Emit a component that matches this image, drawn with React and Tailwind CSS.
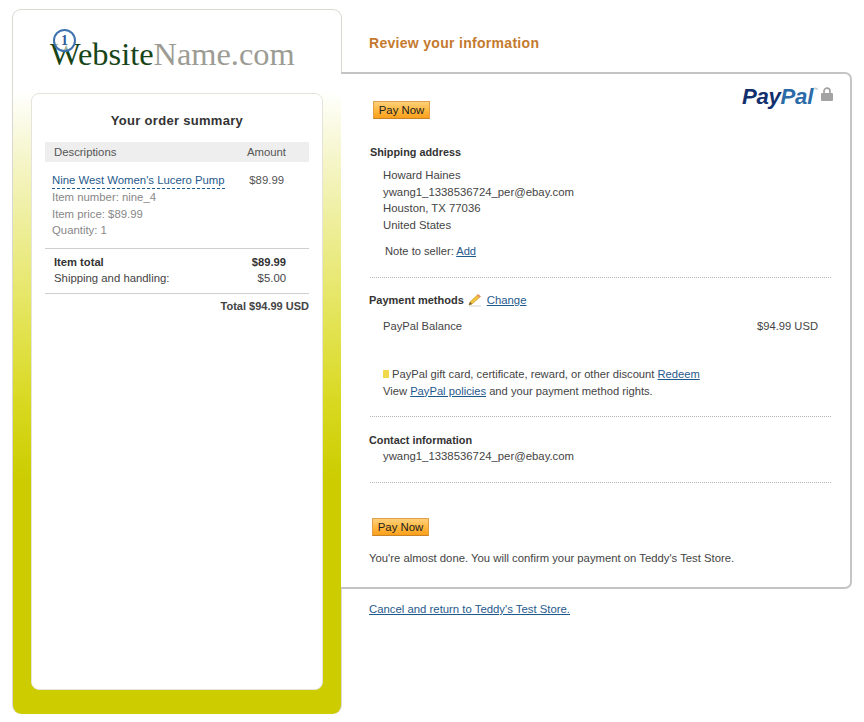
const font = { fontFamily: '"Liberation Sans", Arial, sans-serif' };

function PayButton() {
  return (
    <button className="block w-[57px] h-[18px] border border-[#e0a04a] border-b-[#c9842a] bg-gradient-to-b from-[#ffcf78] via-[#ffb93f] to-[#fb9f1a] text-[11.4px] leading-[16px] text-[#222] text-center p-0">
      Pay Now
    </button>
  );
}

function Pencil() {
  return (
    <svg width="14" height="14" viewBox="0 0 14 14" className="shrink-0">
      <path d="M1 12 L2 9 L10 1.5 L12.5 3.5 L4 11 Z" fill="#f3c53a" stroke="#c9962a" strokeWidth="0.7" />
      <path d="M10 1.5 L12.5 3.5 L11.5 4.6 L9 2.5 Z" fill="#e58a7a" />
      <path d="M1 12 L2 9 L4 11 Z" fill="#6b5a3a" />
      <path d="M1 13 L13 13" stroke="#d5d5d5" strokeWidth="1" />
    </svg>
  );
}

function Lock() {
  return (
    <svg width="12" height="14" viewBox="0 0 12 14" className="mt-[4px] ml-[3px]">
      <path d="M3 6.5 V4.2 a3 3 0 0 1 6 0 V6.5" fill="none" stroke="#a3a3a3" strokeWidth="1.7" />
      <rect x="0" y="6" width="12" height="8" rx="1" fill="#a3a3a3" />
    </svg>
  );
}

function Divider() {
  return <div className="border-t border-dotted border-[#b5b5b5] ml-px mr-[19px]" />;
}

const linkCls = "text-[#1f5a8c] underline";

export default function App() {
  return (
    <div style={font} className="w-[864px] h-[722px] bg-white flex items-start pt-[9px] pl-[12px] text-[11.35px] text-[#444] overflow-hidden">
      <aside className="w-[330px] h-[705px] shrink-0 rounded-[9px] border border-[#d9d9d2] border-b-0 bg-[linear-gradient(to_bottom,#ffffff_11.5%,#f5f5c8_21.5%,#e2e24f_45.6%,#d8d820_56%,#cccc00_67%)] pt-[93px] px-[18px] pb-[23px] relative">
        <div className="absolute left-[37px] top-[24px] text-[32.4px] leading-[40px] whitespace-nowrap" style={{ fontFamily: '"Liberation Serif", serif' }}>
          <span className="text-[#174517]">Website</span><span className="text-[#9c9c94]">Name.com</span>
        </div>
        <div className="absolute left-[40px] top-[19px] w-[23px] h-[23px] rounded-full border-2 border-[#3f74ae] bg-white/60 flex items-center justify-center text-[#2f5f9b] text-[14px] font-bold leading-none" style={{ fontFamily: '"Liberation Serif", serif' }}>1</div>

        <div className="h-[597px] -mt-[10px] bg-white rounded-[8px] border border-[#e4e4da] px-[13px] pt-[19px]">
          <h2 className="text-[13px] leading-[16px] font-bold text-[#333] text-center tracking-[0.3px] mb-[13px]">Your order summary</h2>
          <div className="h-[20px] bg-[#eeeeee] flex items-center justify-between pl-[9px] pr-[23px] pt-px text-[#555]">
            <span>Descriptions</span>
            <span>Amount</span>
          </div>
          <div className="flex justify-between pl-[7px] pr-[25px] pt-[11px] pb-[9px] leading-[16.6px] text-[#888]">
            <div>
              <div className="text-[#1f5a8c] border-b border-dashed border-[#1f5a8c] leading-[15px] w-fit">Nine West Women's Lucero Pump</div>
              <div>Item number: nine_4</div>
              <div>Item price: $89.99</div>
              <div>Quantity: 1</div>
            </div>
            <div className="text-[#555] leading-[15px]">$89.99</div>
          </div>
          <div className="border-t border-[#cfcfcf] pt-[5px] pb-[6px] pl-[9px] pr-[23px] leading-[16.6px] text-[#444]">
            <div className="flex justify-between font-bold text-[#333] text-[11.2px]"><span>Item total</span><span>$89.99</span></div>
            <div className="flex justify-between"><span>Shipping and handling:</span><span>$5.00</span></div>
          </div>
          <div className="border-t border-[#cfcfcf] pt-[5px] text-right font-bold text-[11px] text-[#444] leading-[15px]">Total $94.99 USD</div>
        </div>
      </aside>

      <main className="w-[511px] shrink-0 -ml-px">
        <h1 className="pl-[28px] pt-[25px] text-[14px] leading-[18px] h-[63px] font-bold text-[#c47a2e] tracking-[0.3px]">Review your information</h1>
        <section className="h-[517px] bg-white border-t-2 border-r-2 border-b-2 border-[#c4c4c4] rounded-r-[7px] pl-[28px] relative">
          <div className="absolute right-[17px] top-[9px] flex items-start">
            <span className="text-[22.2px] leading-[28px] font-bold italic tracking-[-0.3px]">
              <span className="text-[#12306e]">Pay</span><span className="text-[#2b6ca8]">Pal</span>
            </span>
            <span className="text-[5px] leading-[12px] text-[#999]">™</span>
            <Lock />
          </div>

          <div className="pt-[27px] pl-[4px]"><PayButton /></div>

          <h3 className="mt-[26px] pl-px font-bold text-[10.85px] text-[#333] leading-[15px]">Shipping address</h3>
          <div className="mt-[7px] pl-[14px] leading-[16.7px]">
            <div>Howard Haines</div>
            <div>ywang1_1338536724_per@ebay.com</div>
            <div>Houston, TX 77036</div>
            <div>United States</div>
          </div>
          <div className="mt-[10px] pl-[16px] leading-[15px] text-[11.15px] mb-[18px]">Note to seller: <a className={linkCls}>Add</a></div>
          <Divider />

          <div className="mt-[15px] flex items-center leading-[15px] font-bold text-[11px] text-[#333]">
            <span>Payment methods</span>
            <span className="ml-[4px]"><Pencil /></span>
            <a className={"ml-[5px] font-normal text-[11.35px] " + linkCls}>Change</a>
          </div>
          <div className="mt-[11px] pl-[14px] pr-[32px] flex justify-between leading-[15px] text-[11.2px]">
            <span>PayPal Balance</span>
            <span>$94.99 USD</span>
          </div>
          <div className="mt-[32px] pl-[14px] leading-[16.7px] text-[11.2px] mb-[17px]">
            <div className="flex items-center">
              <span className="w-[6px] h-[8px] bg-[#f2d84b] mr-[3px]" />
              <span>PayPal gift card, certificate, reward, or other discount <a className={linkCls}>Redeem</a></span>
            </div>
            <div>View <a className={linkCls}>PayPal policies</a> and your payment method rights.</div>
          </div>
          <Divider />

          <h3 className="mt-[16px] font-bold text-[10.85px] text-[#333] leading-[15px]">Contact information</h3>
          <div className="mt-px pl-[14px] leading-[15px] mb-[18px]">ywang1_1338536724_per@ebay.com</div>
          <Divider />

          <div className="mt-[35px] pl-[3px]"><PayButton /></div>
          <p className="mt-[15px] leading-[15px] text-[11.3px]">You're almost done. You will confirm your payment on Teddy's Test Store.</p>
        </section>
        <a className={"block mt-[13px] ml-[28px] w-fit leading-[15px] " + linkCls}>Cancel and return to Teddy's Test Store.</a>
      </main>
    </div>
  );
}
